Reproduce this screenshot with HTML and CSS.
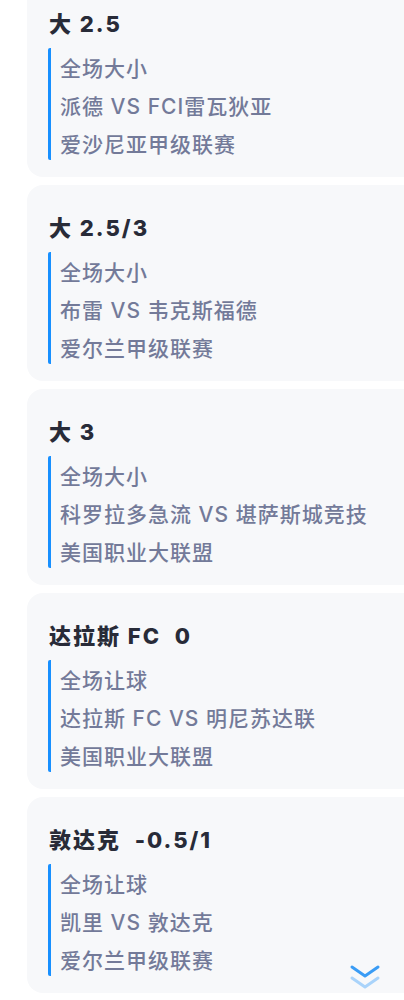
FILE: index.html
```html
<!DOCTYPE html>
<html lang="zh-CN">
<head>
    <meta charset="UTF-8">
    <meta name="viewport" content="width=device-width, initial-scale=1.0">
    <title>推荐列表</title>
    <link rel="stylesheet" href="styles.css">
</head>
<body>

<div class="list">
    <div class="card">
        <div class="title">大 2.5</div>
        <div class="info">
            <div class="line">全场大小</div>
            <div class="line">派德 VS FCI雷瓦狄亚</div>
            <div class="line">爱沙尼亚甲级联赛</div>
        </div>
    </div>

    <div class="card">
        <div class="title">大 2.5/3</div>
        <div class="info">
            <div class="line">全场大小</div>
            <div class="line">布雷 VS 韦克斯福德</div>
            <div class="line">爱尔兰甲级联赛</div>
        </div>
    </div>

    <div class="card">
        <div class="title">大 3</div>
        <div class="info">
            <div class="line">全场大小</div>
            <div class="line">科罗拉多急流 VS 堪萨斯城竞技</div>
            <div class="line">美国职业大联盟</div>
        </div>
    </div>

    <div class="card">
        <div class="title">达拉斯 FC&nbsp; 0</div>
        <div class="info">
            <div class="line">全场让球</div>
            <div class="line">达拉斯 FC VS 明尼苏达联</div>
            <div class="line">美国职业大联盟</div>
        </div>
    </div>

    <div class="card">
        <div class="title">敦达克&nbsp; -0.5/1</div>
        <div class="info">
            <div class="line">全场让球</div>
            <div class="line">凯里 VS 敦达克</div>
            <div class="line">爱尔兰甲级联赛</div>
        </div>
    </div>
</div>

<!-- 向下更多 -->
<div class="more">
    <svg width="30" height="28" viewBox="0 0 30 28">
        <path d="M2 3 L15 12 L28 3" fill="none" stroke="#3a9cf5" stroke-width="3" stroke-linecap="round" stroke-linejoin="round"/>
        <path d="M2 14 L15 23 L28 14" fill="none" stroke="#a9d3fa" stroke-width="3" stroke-linecap="round" stroke-linejoin="round"/>
    </svg>
</div>

</body>
</html>
```

FILE: styles.css
```css
body {
    margin: 0;
    background-color: #fff;
    font-family: "Inter", "Noto Sans CJK SC", sans-serif;
    overflow: hidden;
}
.list {
    display: flex;
    flex-direction: column;
    gap: 8px;
    margin-top: -19px;
    padding-left: 27px;
}
.card {
    width: 377px;
    background-color: #f7f8fa;
    border-radius: 16px 0 0 16px;
    padding: 29px 0 17px 22px;
    box-sizing: border-box;
}
.title {
    font-size: 22px;
    font-weight: 800;
    line-height: 28px;
    letter-spacing: 2px;
    color: #282b38;
    white-space: pre;
}
.info {
    margin-top: 10px;
    margin-left: -1px;
    padding: 6px 0 0 9px;
    border-left: 3.5px solid #1890ff;
    border-radius: 2px;
    display: flex;
    flex-direction: column;
    gap: 8px;
}
.line {
    font-size: 21px;
    font-weight: 500;
    line-height: 30px;
    letter-spacing: 1px;
    color: #737a99;
}
.more {
    position: fixed;
    right: 24px;
    bottom: 8px;
}
.more svg {
    display: block;
}
```
